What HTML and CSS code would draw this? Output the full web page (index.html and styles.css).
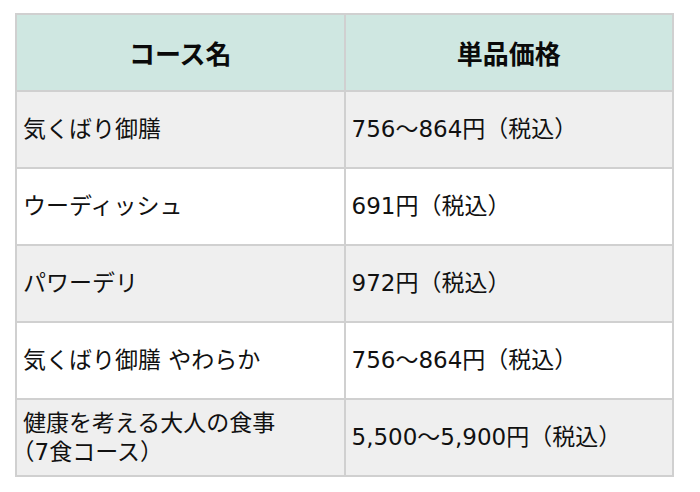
FILE: index.html
```html
<!DOCTYPE html>
<html lang="ja">
<head>
<meta charset="utf-8">
<link rel="stylesheet" href="styles.css">
</head>
<body>
<table class="price-table">
  <colgroup><col class="c1"><col class="c2"></colgroup>
  <thead>
    <tr><th>コース名</th><th>単品価格</th></tr>
  </thead>
  <tbody>
    <tr class="odd"><td>気くばり御膳</td><td>756～864円（税込）</td></tr>
    <tr><td>ウーディッシュ</td><td>691円（税込）</td></tr>
    <tr class="odd"><td>パワーデリ</td><td>972円（税込）</td></tr>
    <tr><td>気くばり御膳 やわらか</td><td>756～864円（税込）</td></tr>
    <tr class="odd"><td class="two"><span class="line">健康を考える大人の食事</span><span class="line"><span class="halt">（</span>7食コース）</span></td><td>5,500～5,900円（税込）</td></tr>
  </tbody>
</table>
</body>
</html>
```

FILE: styles.css
```css
html, body {
  margin: 0;
  padding: 0;
  background: #ffffff;
}
body {
  padding: 13px 0 0 15px;
  font-family: "DejaVu Sans", "Noto Sans CJK JP", sans-serif;
  color: #111111;
}
.price-table {
  border-collapse: collapse;
  width: 659px;
  table-layout: fixed;
}
.c1, .c2 { width: 50%; }
.price-table th,
.price-table td {
  border: 2px solid #d0d0d0;
  height: 77px;
  padding: 0 0 0 6px;
  vertical-align: middle;
  box-sizing: border-box;
}
.price-table th {
  background: #cfe7e1;
  font-family: "Noto Sans CJK JP", sans-serif;
  font-size: 26px;
  font-weight: bold;
  text-align: center;
  padding: 0;
  color: #0a0a0a;
}
.price-table td {
  font-size: 23px;
  text-align: left;
  line-height: 1.3;
  background: #ffffff;
}
.price-table tr.odd td {
  background: #efefef;
}
.price-table td.two .line {
  display: block;
  line-height: 27px;
}
.halt {
  font-family: "Noto Sans CJK JP", sans-serif;
  font-feature-settings: "halt";
}
```
